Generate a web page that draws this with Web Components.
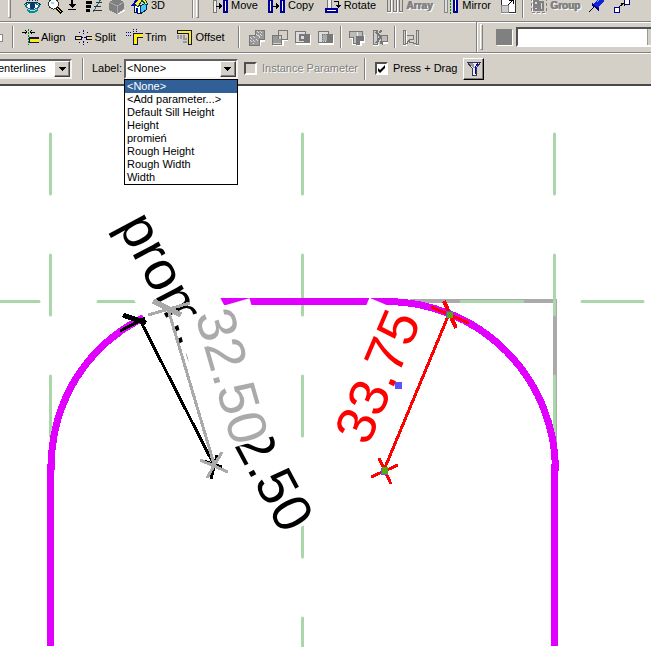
<!DOCTYPE html>
<html lang="en">
<head>
<meta charset="utf-8">
<title>Family editor</title>
<style>
html, body { margin: 0; background: #fff; }
body { font: 11px/13px "Liberation Sans", Arial, sans-serif; color: #000; }
</style>
</head>
<body>
<family-editor></family-editor>
<script>
const ICONS = {
  eye: '<path d="M2 1l2 3M8 0v4M15 1l-2 3M5 2l1 2M12 2l-1 2" stroke="#0a3050"/><path d="M0 8l4-3h9l4 3" stroke="#035"/><path d="M1 9q7-6 15 0q-7 7-15 0" fill="#fff" stroke="#067a8c"/><circle cx="8.500" cy="9" r="3" fill="#137"/><path d="M3 13q5 4 11 0" stroke="#008c9c" stroke-width="2"/>',
  zoom: '<circle cx="6.500" cy="7" r="5" fill="#fff" stroke="#333"/><path d="M4 5h3v2H4z" fill="#8df"/><path d="M10 11l5 5" stroke="#000" stroke-width="3"/><path d="M10 11l4 4" stroke="#fe3"/>',
  down: '<path d="M5 3v6" stroke="#000" stroke-width="2"/><path d="M1 7h8l-4 4zM1 12h8v1H1z" fill="#000"/>',
  list: '<path d="M1 5h6M1 9h5M1 13h4" stroke="#000" stroke-width="3"/><path d="M16 2l-8 13" stroke="#067a7a"/><path d="M11 5h6M9 9h7M8 13h9" stroke="#333"/>',
  cube: '<path d="M1 5l7-4 8 4v7l-7 5-8-4z" fill="#808080"/><path d="M1 5l8 4 7-4M9 9v8" stroke="#aaa"/><path d="M17 6v7l-8 5" stroke="#fff"/>',
  house: '<path d="M3 8v7l6 2v-8z" fill="#fff" stroke="#024"/><path d="M9 9v8l6-4V6z" fill="#4cf" stroke="#024"/><path d="M1 9l6-6 7-1 3 6-3-1-3-4-4 7-3-3z" fill="#fe2" stroke="#045"/><path d="M5 11h2v5H5z" fill="#00a"/><path d="M1 9l5-6" stroke="#00c" stroke-width="2"/>',
  move: '<path d="M2 3h3v12H2z" fill="#eee" stroke="#777"/><path d="M13 3h3v12h-3z" fill="#fff" stroke="#009" stroke-width="2"/><path d="M5 9h6" stroke="#000"/><path d="M8 6l4 3-4 3z" fill="#000"/>',
  copy: '<path d="M1 3h3v12H1zM13 3h3v12h-3z" fill="#fff" stroke="#009" stroke-width="2"/><path d="M5 9h6" stroke="#000"/><path d="M8 6l4 3-4 3z" fill="#000"/>',
  rotate: '<path d="M3 1h4v11H3z" fill="#eee" stroke="#777"/><path d="M2 12h11v3H2z" fill="#fff" stroke="#009" stroke-width="2"/><path d="M10 4h4v5" stroke="#000"/><path d="M12 8h5l-3 3z" fill="#000"/>',
  array: '<path d="M2 3h3v12H2zM8 3h3v12H8zM14 3h3v12h-3z" stroke="#fff" stroke-width="2"/><path d="M1 2h3v12H1zM7 2h3v12H7zM13 2h3v12h-3z" fill="#d4d0c8" stroke="#777"/>',
  mirror: '<path d="M2 2h3v13H2z" fill="#ddd" stroke="#888"/><path d="M8.500 0v17" stroke="#080" stroke-dasharray="2 1"/><path d="M12 2h3v13h-3z" fill="#fff" stroke="#009" stroke-width="2"/>',
  resize: '<path d="M2 2h14v13H2z" fill="#fff" stroke="#333"/><path d="M2 8h7v7H2z" fill="#ccc" stroke="#888"/><path d="M9 8l5-5M10 3h4v4" stroke="#000"/><path d="M2 16h15" stroke="#fff"/>',
  group: '<path d="M2 2h15v14H2z" stroke="#fff" stroke-dasharray="3 2"/><path d="M1 1h15v14H1z" stroke="#808080" stroke-dasharray="3 2"/><path d="M4 4h4v4H4zM10 5h3v8h-3zM4 10h4v3H4z" fill="#ddd" stroke="#808080" stroke-width="2"/>',
  pin: '<path d="M1 15l6-6" stroke="#000"/><path d="M5 7l3-2 4-5 4 4-4 4-2 4z" fill="#12d"/><path d="M4 7l7 6" stroke="#008" stroke-width="2"/><path d="M9 5l3-3" stroke="#9bf"/>',
  link: '<path d="M1 10h5v5H1zM11 2h5v5h-5z" fill="#fff" stroke="#009"/><path d="M6 10l5-4M8 6h3v3" stroke="#000"/>',
  align: '<path d="M6.500 0v16" stroke="#080" stroke-dasharray="2 1"/><path d="M0 3h5M8 3h5M3 1l2 2-2 2M10 1L8 3l2 2" stroke="#000"/><path d="M7 9h10v4H7z" fill="#fe0" stroke="#115"/><path d="M7 8h10" stroke="#115"/>',
  split: '<path d="M0 7h6v3H0zM11 7h6v3h-6z" fill="#fe0" stroke="#008"/><path d="M8.500 1v4M8.500 12v4M4 3l2 2M13 3l-2 2M4 14l2-2M13 14l-2-2M6 8.500h6" stroke="#008" stroke-dasharray="2 1"/>',
  trim: '<path d="M0 3h6M0 6h5M7 0v3M10 0v3" stroke="#008" stroke-dasharray="1 1"/><path d="M17 4H7v11h4V8h6z" fill="#fe0" stroke="#115"/>',
  offset: '<path d="M1 8h8v7" stroke="#999" stroke-width="4" stroke-dasharray="2 1"/><path d="M1 1h14v14h-3V4H1z" fill="#fe0" stroke="#115"/>',
  join: '<path d="M17 2v10h-5v5H2" stroke="#fff" stroke-width="2"/><path d="M7 1h9v9h-5v6H1V6h6z" fill="#999" stroke="#777"/><path d="M2 8l7 7M2 11l4 4M5 7l6 6M8 5l6 5M9 2l6 6M12 2l3 3" stroke="#ddd" stroke-dasharray="1 1"/>',
  unjoin: '<path d="M17 2v9h-5v6H2" stroke="#fff" stroke-width="2"/><path d="M7 1h9v9H7zM1 6h9v9H1z" stroke="#777"/><path d="M2 7h5v3h3v4H2z" fill="#999"/>',
  cut: '<path d="M2 15h10M9 15h8V6" stroke="#fff" stroke-width="2"/><path d="M1 2h10v11H1z" fill="#ddd" stroke="#777"/><path d="M5 5h11v9h-6v-2H5z" fill="#777"/><path d="M7 7h3v3H7z" fill="#ddd"/>',
  uncut: '<path d="M2 15h10M9 15h8V6" stroke="#fff" stroke-width="2"/><path d="M1 2h10v11H1z" fill="#ddd" stroke="#777"/><path d="M10 5h6v9h-6z" fill="#777"/><path d="M5 5h5v7H5z" fill="#aaa" stroke="#777" stroke-dasharray="1 1"/>',
  cope: '<path d="M2 9h3v6h3M9 16h4v-3h4V6" stroke="#fff" stroke-width="2"/><path d="M1 2h13v6H8v6H5V8H1z" fill="#bbb" stroke="#777"/><path d="M8 7h8v5h-4v4H8z" fill="#777"/><path d="M9 3v4" stroke="#eee"/>',
  uncope: '<path d="M3 2v14h5M11 14h6V8" stroke="#fff" stroke-width="2"/><path d="M2 1h4v14H2z" fill="#ccc" stroke="#777"/><path d="M5 3l5 5-5 6M8 3l3-1M9 13l3 2" stroke="#777" stroke-width="2"/><path d="M10 6h6v6h-6z" fill="#bbb" stroke="#777"/>',
  wall: '<path d="M4 2v14H1M17 2v14h-4" stroke="#fff"/><path d="M1 1h2v14H1zM14 1h2v14h-2zM3 14h3M11 14h3M5 6h6v4H7v3h5M8 10l-3 4" stroke="#777"/>',
  edge: '<path d="M9 5h6v7H9" fill="#fff" stroke="#888"/>',
  filter: '<path d="M2 2h14l-5 6v7H7V8z" fill="#eef" stroke="#335"/><path d="M4 3h4l2 5H8z" fill="#999"/><path d="M13 3l-3 5v6" stroke="#00a"/>'
};
const svgIcon = n => `<svg viewBox="0 0 17 17" aria-hidden="true" fill="none" shape-rendering="crispEdges">${ICONS[n]}</svg>`;

function define(name, render) {
  customElements.define(name, class extends HTMLElement {
    connectedCallback() {
      if (this.shadowRoot) return;
      const t = document.createElement('template');
      t.innerHTML = render(this);
      this.attachShadow({ mode: 'open' }).append(t.content.cloneNode(true));
    }
  });
}

define('tool-button', el => `<style>
:host { display: block; flex: none; }
button { display: flex; align-items: center; gap: var(--gap, 3px); height: 16px; margin: 0; padding: 0 5px; border: 0; background: none; font: inherit; color: #000; white-space: nowrap; }
:host([compact]) button { padding: 0 3px; }
:host([narrow]) button { padding: 0; width: 15px; }
:host([cut]) button { padding: 0; margin-left: -13px; }
:host([raised]) button { height: 22px; padding: 0 1px; border: 1px solid; border-color: #fff #000 #000 #fff; box-shadow: inset -1px -1px #808080; }
button:disabled { color: #808080; text-shadow: 1px 1px #fff; }
:host([heavy]) button { font-weight: bold; font-size: 10px; text-shadow: 1px 0 #808080, 2px 1px #fff; }
svg { flex: none; width: 17px; height: 17px; display: block; }
</style><button type="button" ${el.hasAttribute('disabled') ? 'disabled' : ''} aria-label="${el.getAttribute('name') || el.textContent}">${svgIcon(el.getAttribute('icon'))}<slot></slot></button>`);

define('tool-sep', () => `<style>
:host { display: block; flex: none; width: 1px; height: 22px; margin: 0 3px; background: #808080; border-right: 1px solid #fff; }
:host([wide]) { margin-left: 8px; }
:host([option]) { margin: 0 8px 0 10px; }
:host([edge]) { height: 100%; margin: 0 2px 0 0; }
</style>`);

define('tool-grip', () => `<style>
:host { display: block; flex: none; width: 1px; height: 24px; border: 1px solid; border-color: #fff #808080 #808080 #fff; }
</style>`);

define('tool-row', () => `<style>
:host { display: flex; align-items: center; height: 30px; border-bottom: 1px solid #808080; box-shadow: inset 0 1px #fff; }
:host([clipped]) { height: 21px; align-items: flex-end; overflow: hidden; box-shadow: none; }
:host([clipped]) ::slotted(tool-button) { padding-bottom: 8px; }
:host([clipped]) ::slotted(tool-sep), :host([clipped]) ::slotted(tool-grip) { margin-bottom: 3px; }
:host([options]) { height: 31px; border-bottom: 2px solid #484848; }
</style><slot></slot>`);

const ARROW = '<svg viewBox="0 0 7 4" aria-hidden="true" shape-rendering="crispEdges"><path d="M0 0h7L4 4H3z"/></svg>';
const COMBO_CSS = `
.combo { display: flex; box-sizing: border-box; height: 20px; border: 2px solid; border-color: #606060 #f4f2ee #f4f2ee #606060; background: #fff; }
.combo select { appearance: none; flex: 1; min-width: 0; border: 0; margin: 0; padding: 0 1px; background: #fff; color: #000; font: inherit; border-radius: 0; outline: 0; }
.arrow { display: grid; place-items: center; box-sizing: border-box; width: 16px; background: #d4d0c8; border: 1px solid; border-color: #fff #404040 #404040 #fff; box-shadow: inset -1px -1px #808080; }
.arrow svg { width: 7px; height: 4px; }`;

define('reference-combo', () => `<style>
:host { display: block; flex: none; width: 85px; margin-left: -13px; }
${COMBO_CSS}
</style><div class="combo"><select aria-label="Reference"><option>Centerlines</option></select><span class="arrow">${ARROW}</span></div>`);

define('label-picker', () => `<style>
:host { display: flex; align-items: center; flex: none; gap: 2px; }
.field { position: relative; width: 114px; }
${COMBO_CSS}
.list { position: absolute; z-index: 2; top: 20px; left: 0; box-sizing: border-box; width: 100%; height: 106px; margin: 0; padding: 0; border: 1px solid #000; border-radius: 0; background: #fff; font: inherit; overflow: hidden; outline: 0; scrollbar-width: none; }
.list option { height: 13px; min-height: 13px; line-height: 13px; box-sizing: border-box; padding: 0 2px; color: #000; }
.list option:checked { background: #316098 linear-gradient(#316098, #316098); color: #fff; }
</style><label for="value">Label:</label>
<div class="field"><div class="combo"><select id="value"><option>&lt;None&gt;</option></select><span class="arrow">${ARROW}</span></div>
<select class="list" size="8" aria-label="Label parameters">
<option selected>&lt;None&gt;</option><option>&lt;Add parameter...&gt;</option><option>Default Sill Height</option><option>Height</option><option>promień</option><option>Rough Height</option><option>Rough Width</option><option>Width</option>
</select></div>`);

define('check-option', el => `<style>
:host { display: block; flex: none; }
label { display: flex; align-items: center; gap: 5px; white-space: nowrap; }
.off { color: #808080; text-shadow: 1px 1px #fff; }
input { appearance: none; box-sizing: border-box; width: 13px; height: 13px; margin: 0; border: 2px solid; border-color: #505050 #fff #fff #505050; background: #fff; }
input:disabled { background: #d4d0c8; }
.box { display: grid; }
.box > * { grid-area: 1 / 1; }
svg { width: 13px; height: 13px; pointer-events: none; }
</style><label class="${el.hasAttribute('disabled') ? 'off' : ''}"><span class="box"><input type="checkbox" ${el.hasAttribute('disabled') ? 'disabled' : ''} ${el.hasAttribute('checked') ? 'checked' : ''}>${el.hasAttribute('checked') ? '<svg viewBox="0 0 13 13" aria-hidden="true"><path d="M3 6l2 2 5-5v3l-5 5-2-2z"/></svg>' : ''}</span><slot></slot></label>`);

define('type-selector', () => `<style>
:host { display: flex; align-items: center; flex: 1; min-width: 0; gap: 4px; margin-left: 13px; overflow: hidden; }
.swatch { flex: none; width: 16px; height: 16px; background: #808080; box-shadow: 1px 1px #fff; }
.field { flex: 1; min-width: 0; display: flex; box-sizing: border-box; height: 20px; border: 2px solid; border-color: #505050 #fff #fff #505050; border-right: 0; }
input { flex: 1; min-width: 0; border: 0; padding: 0 2px; margin: 0; font: inherit; background: #fff; }
.knob { width: 4px; border-left: 1px solid #fff; background: #d4d0c8; box-shadow: inset 1px 0 #999; }
</style><span class="swatch"></span><div class="field"><input type="text" aria-label="Type"><span class="knob"></span></div>`);

define('sketch-canvas', () => `<style>
:host { display: block; }
svg { display: block; width: 100%; height: auto; }
text { font-family: "Liberation Sans", Arial, sans-serif; font-size: 55px; }
.mask { fill: #fff; }
</style>
<svg viewBox="0 86 651 561" role="img" aria-label="Sketch" fill="none">
<g stroke="#aaa" stroke-width="4" shape-rendering="crispEdges"><path d="M410 301H557M555 301V450"/></g>
<g stroke="#aad6aa" stroke-width="3" stroke-linecap="round">
<path d="M0 301.500H39M98 301.500H160M461 301.500H523M582 301.500H643"/>
<path d="M50.500 134V194M50.500 255V315M50.500 376V436M302.500 134V194M302.500 255V315M302.500 376V436M302.500 497V557M302.500 618V646M554.500 134V194M554.500 255V315M554.500 376V436"/></g>
<g stroke="#e100ff" stroke-width="7" shape-rendering="crispEdges">
<path d="M50.500 646V464M51.500 470A163 163 0 0 1 214 301.500H386A169 169 0 0 1 555.500 471M554.500 464V646"/></g>
<g transform="translate(117 225) rotate(62)"><path class="mask" d="M0-57H353V20H0z"/><text fill="#000">promień 32.50</text></g>
<g stroke="#000" stroke-width="3" shape-rendering="crispEdges"><path d="M140 320L213 463M120 331L145 318M200 460L222 467M211 479L217 455"/><path stroke-width="5" d="M123 315L146 323"/></g>
<g transform="translate(195 315) rotate(74)"><path class="mask" d="M-1-57H138V19H-1z"/><text fill="#aaa">32.50</text></g>
<g stroke="#aaa" stroke-width="3" shape-rendering="crispEdges"><path d="M168 309L214 464M148 315L190 303M222 452L207 478M200 460L228 472"/><path stroke-width="5" d="M153 301L181 315"/></g>
<g transform="translate(368 447) rotate(-67)"><path class="mask" d="M0-57H138V20H0z"/><text fill="#f00">33.75</text></g>
<g stroke="#f00" stroke-width="3" shape-rendering="crispEdges"><path d="M384 470L449 314M431 307L469 323M379 458L391 484M371 477L398 465"/><path stroke-width="4" d="M444 301L456 328"/></g>
<g shape-rendering="crispEdges"><path fill="#55f" d="M395 382h7v7h-7zM381 468h7v7h-7zM446 311h7v7h-7z"/><path fill="#5a1" d="M382 467h6v7h-6zM447 312h6v6h-6z"/></g>
</svg>`);

define('family-editor', () => `<style>
:host { display: block; }
.bars { background: #d4d0c8; position: relative; z-index: 1; }
.row2 { --gap: 2px; }
.lead { margin-left: 8px; margin-right: 10px; }
.next { margin-left: 24px; }
.edit { margin-right: 7px; }
.far { margin-left: 54px; }
.tools { margin-left: 8px; margin-right: 5px; }
.label { margin-right: 6px; }
.press { margin-left: 6px; }
.filter { margin-left: 6px; }
</style>
<div class="bars">
<tool-row clipped>
<tool-grip class="lead"></tool-grip>
<tool-button compact icon="eye" name="Visibility"></tool-button><tool-button compact icon="zoom" name="Zoom"></tool-button><tool-button narrow icon="down" name="Zoom options"></tool-button><tool-button compact icon="list" name="Thin lines"></tool-button><tool-button compact icon="cube" name="Shade" disabled></tool-button><tool-button compact icon="house">3D</tool-button>
<tool-sep edge class="next"></tool-sep><tool-grip class="edit"></tool-grip>
<tool-button icon="move">Move</tool-button><tool-button icon="copy">Copy</tool-button><tool-button icon="rotate">Rotate</tool-button><tool-button icon="array" disabled heavy>Array</tool-button><tool-button icon="mirror">Mirror</tool-button><tool-button compact icon="resize" name="Resize"></tool-button><tool-sep></tool-sep><tool-button compact icon="group" disabled heavy>Group</tool-button><tool-button icon="pin" name="Pin"></tool-button><tool-button compact icon="link" name="Link"></tool-button>
</tool-row>
<tool-row class="row2">
<tool-button cut icon="edge" name="Tape" disabled></tool-button><tool-sep wide></tool-sep>
<tool-button icon="align">Align</tool-button><tool-button icon="split">Split</tool-button><tool-button icon="trim">Trim</tool-button><tool-button icon="offset">Offset</tool-button><tool-sep class="tools"></tool-sep>
<tool-button compact disabled icon="join" name="Join"></tool-button><tool-button compact disabled icon="unjoin" name="Unjoin"></tool-button><tool-button compact disabled icon="cut" name="Cut"></tool-button><tool-button compact disabled icon="uncut" name="Uncut"></tool-button><tool-sep></tool-sep>
<tool-button compact disabled icon="cope" name="Cope"></tool-button><tool-button compact disabled icon="uncope" name="Remove coping"></tool-button><tool-sep></tool-sep><tool-button compact disabled icon="wall" name="Wall joins"></tool-button>
<tool-sep edge class="far"></tool-sep><tool-grip></tool-grip><type-selector></type-selector>
</tool-row>
<tool-row options>
<reference-combo></reference-combo><tool-sep option></tool-sep><label-picker class="label"></label-picker>
<check-option disabled>Instance Parameter</check-option><tool-sep class="press"></tool-sep><check-option checked class="press">Press + Drag</check-option><tool-button raised class="filter" icon="filter" name="Filter"></tool-button>
</tool-row>
</div>
<sketch-canvas></sketch-canvas>`);
</script>
</body>
</html>
